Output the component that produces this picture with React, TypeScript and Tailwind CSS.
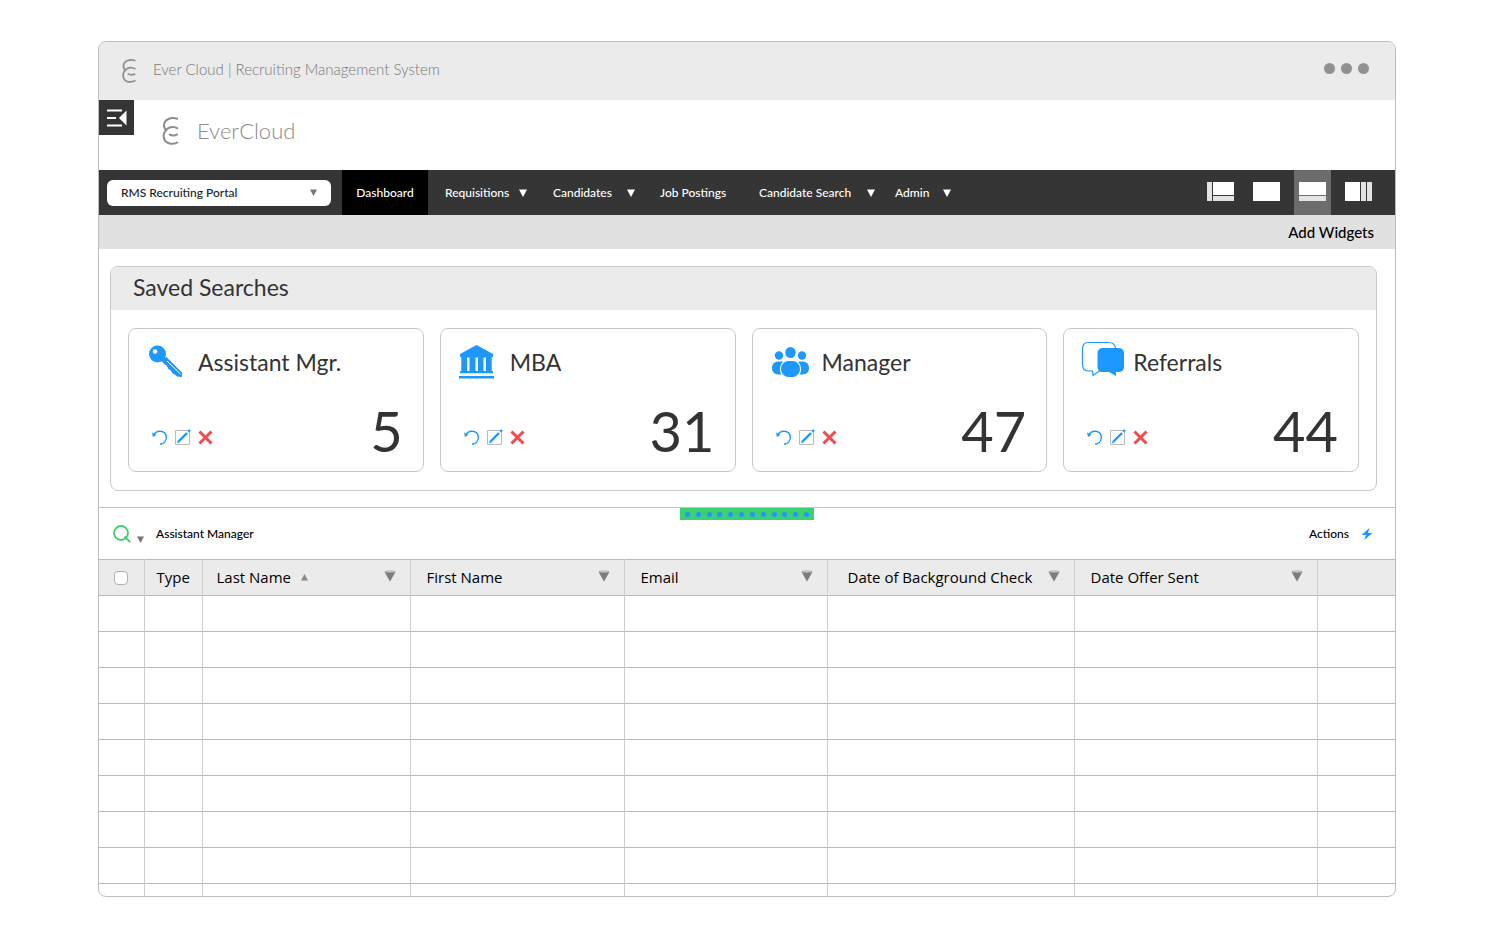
import { useState } from 'react';
import type { ReactNode } from 'react';

interface SavedSearch {
  title: string;
  count: number;
  icon: ReactNode;
}

interface Column {
  label: string;
  width: string;
  padding: string;
  sorted?: boolean;
}

const KeyIcon = () => (
  <svg viewBox="0 0 44 40" className="h-10 w-11 fill-[#1d98ff]" aria-hidden="true">
    <path d="M20.500 16 36 31.500V36L31 35.600 28.800 33.400 26.600 32.600 24.600 29.200 22.400 28 20.600 24.600 18.600 23.400 14.500 19Z" />
    <circle cx="11.500" cy="13" r="8.500" />
    <circle cx="9" cy="10.500" r="2.300" fill="#fff" />
    <path d="M21 20 34.500 33" stroke="#fff" strokeWidth="1" fill="none" />
  </svg>
);

const BankIcon = () => (
  <svg viewBox="0 0 44 40" className="h-10 w-11 fill-[#1d98ff]" aria-hidden="true">
    <path d="M18.500 4 35 13v3h-1.300v14H35v2.300H2V30h1.300V16H2v-3Z" />
    <rect x="1" y="35" width="35" height="2.500" />
    <path d="M9 16.500h2.500V30H9ZM17.500 16.500h2.500V30h-2.500ZM25.500 16.500H28V30h-2.500Z" fill="#fff" />
  </svg>
);

const PeopleIcon = () => (
  <svg viewBox="0 0 44 40" className="h-10 w-11 fill-[#1d98ff]" aria-hidden="true">
    <circle cx="9" cy="14.500" r="4.200" />
    <circle cx="32" cy="14.500" r="4.200" />
    <ellipse cx="20.500" cy="11.500" rx="5.200" ry="5.500" />
    <rect x="2" y="20.500" width="15" height="13" rx="6" />
    <rect x="24" y="20.500" width="15" height="13" rx="6" />
    <rect x="10.500" y="19.500" width="20" height="17" rx="8" stroke="#fff" strokeWidth="1.200" />
  </svg>
);

const ChatIcon = () => (
  <svg viewBox="0 0 44 40" className="h-10 w-11" aria-hidden="true">
    <path
      d="M7 1.500H27Q34.500 1.500 34.500 8V23Q34 30 27 30H18L12 34.500 11.500 30H7Q1.500 30 1.500 23V8Q1.500 1.500 7 1.500Z"
      fill="#fff"
      stroke="#1d98ff"
      strokeWidth="1.200"
    />
    <path
      d="M22 7H37Q43 7 43 12.500V26Q43 31 37 31H35V35L28 31H22Q16.500 31 16.500 26V12.500Q16.500 7 22 7Z"
      fill="#1d98ff"
    />
  </svg>
);

const savedSearches: SavedSearch[] = [
  { title: 'Assistant Mgr.', count: 5, icon: <KeyIcon /> },
  { title: 'MBA', count: 31, icon: <BankIcon /> },
  { title: 'Manager', count: 47, icon: <PeopleIcon /> },
  { title: 'Referrals', count: 44, icon: <ChatIcon /> },
];

const columns: Column[] = [
  { label: 'Last Name', width: 'w-[208px]', padding: 'pl-3.5', sorted: true },
  { label: 'First Name', width: 'w-[214px]', padding: 'pl-4' },
  { label: 'Email', width: 'w-[203px]', padding: 'pl-4' },
  { label: 'Date of Background Check', width: 'w-[247px]', padding: 'pl-5' },
  { label: 'Date Offer Sent', width: 'w-[243px]', padding: 'pl-4' },
];

const navItems = [
  { label: 'Requisitions', width: 'w-[82px]', gap: 'mr-[26px]', menu: true },
  { label: 'Candidates', width: 'w-[82px]', gap: 'mr-[25px]', menu: true },
  { label: 'Job Postings', width: 'w-[74px]', gap: 'mr-[25px]', menu: false },
  { label: 'Candidate Search', width: 'w-[116px]', gap: 'mr-5', menu: true },
  { label: 'Admin', width: 'w-[56px]', gap: 'mr-0', menu: true },
];

const layouts = [
  {
    name: 'Sidebar layout',
    shapes: (
      <>
        <path d="M0 0h5v19H0ZM6 14h21v5H6Z" fill="#e3e3e3" />
        <path d="M6 0h21v13H6Z" fill="#fff" />
      </>
    ),
  },
  { name: 'Full layout', shapes: <path d="M0 0h27v19H0Z" fill="#fff" /> },
  {
    name: 'Split layout',
    shapes: (
      <>
        <path d="M0 0h27v13H0Z" fill="#fff" />
        <path d="M0 14h27v5H0Z" fill="#e3e3e3" />
      </>
    ),
  },
  {
    name: 'Columns layout',
    shapes: (
      <>
        <path d="M0 0h15v19H0Z" fill="#fff" />
        <path d="M16 0h5v19h-5ZM22 0h5v19h-5Z" fill="#e3e3e3" />
      </>
    ),
  },
];

function Logo({ className }: { className: string }) {
  return (
    <svg viewBox="0 0 48 82" className={className} fill="none" stroke="#8e8e8e" strokeWidth="6" aria-hidden="true">
      <path d="M46 6C38 3 27 2 18 6C9 10 5 17 5 25C5 32 8 37 14 40" />
      <path d="M46 34C38 29 26 28 17 33C7 39 4 47 4 56C4 68 11 76 23 78C32 79 40 78 46 73" />
      <path d="M20 50C27 55 37 55 45 50" />
    </svg>
  );
}

function Triangle({ className }: { className: string }) {
  return (
    <svg viewBox="0 0 8 8" className={className} fill="currentColor" aria-hidden="true">
      <path d="M0 .5h8L4 8Z" />
    </svg>
  );
}

function FilterIcon() {
  return (
    <svg viewBox="0 0 12 12" className="mb-1 size-3 shrink-0" aria-hidden="true">
      <path d="M.5 1.800 6 11.500 11.500 1.800Z" fill="#7c7c7c" />
      <ellipse cx="6" cy="1.800" rx="4.800" ry=".9" fill="#ddd" stroke="#8a8a8a" strokeWidth=".6" />
    </svg>
  );
}

function SearchCard({ title, count, icon }: SavedSearch) {
  return (
    <article className="flex h-36 flex-col rounded-lg border border-[#c8c8c8] bg-white pt-3 pr-5 pl-[17px]">
      <div className="flex items-center gap-2">
        {icon}
        <h3 className="pt-0.5 text-[23px] leading-8">{title}</h3>
      </div>
      <div className="flex items-center justify-between pt-5 pl-1.5">
        <div className="flex gap-2 pt-3">
          <button type="button" aria-label={`Refresh ${title}`}>
            <svg viewBox="0 0 15 15" className="size-[15px]" aria-hidden="true">
              <path d="M1.500 5.500C4-.5 14-.5 14.300 7.500 14.300 11.500 11.500 14 8 14.200" fill="none" stroke="#1d98ff" strokeWidth="1.400" />
              <path d="M0 2.500 1 7 4.500 5Z" fill="#1d98ff" />
            </svg>
          </button>
          <button type="button" aria-label={`Edit ${title}`}>
            <svg viewBox="0 0 15 15" className="size-[15px] overflow-visible" aria-hidden="true">
              <path d="M.5.5h14v14H.5Z" fill="#fff" stroke="#bbb" />
              <path d="M3.500 11.500 12 3M13.300 1.700 15 0" stroke="#1d98ff" strokeWidth="2.400" />
              <path d="M2 13.300 2.500 10.800 4.500 12.800Z" fill="#1d98ff" />
            </svg>
          </button>
          <button type="button" aria-label={`Delete ${title}`}>
            <svg viewBox="0 0 15 15" className="size-[15px]" aria-hidden="true">
              <path d="M1.500 1.500l12 12M13.500 1.500l-12 12" stroke="#f4494f" strokeWidth="3" />
            </svg>
          </button>
        </div>
        <span className="text-[56px] leading-[60px]">{count}</span>
      </div>
    </article>
  );
}

export default function App() {
  const [activeLayout, setActiveLayout] = useState('Split layout');

  return (
    <div className="min-h-screen bg-white pt-[41px] pr-[104px] pb-[43px] pl-[98px] font-['Lato',sans-serif] text-[#333]">
      <div className="overflow-hidden rounded-lg border border-[#bdbdbd]">
        {/* Title bar */}
        <header className="flex h-[58px] items-center bg-[#ebebeb] pr-[26px] pl-[22px]">
          <Logo className="h-6 w-4" />
          <span className="pb-1 pl-4 text-[15px] font-light text-[#777]">
            Ever Cloud | Recruiting Management System
          </span>
          <button type="button" aria-label="More options" className="ml-auto flex gap-1.5 pb-1.5">
            <span className="size-[11px] rounded-full bg-[#919191]" />
            <span className="size-[11px] rounded-full bg-[#919191]" />
            <span className="size-[11px] rounded-full bg-[#919191]" />
          </button>
        </header>

        {/* Brand */}
        <div className="flex h-[70px] items-start">
          <button type="button" aria-label="Collapse menu" className="flex size-[35px] items-center justify-center bg-[#353535]">
            <svg viewBox="0 0 20 18" className="h-[18px] w-5" aria-hidden="true">
              <path d="M0 1.500h15M0 9h9M0 16.500h15" stroke="#fff" strokeWidth="2" />
              <path d="M19.500 1.500v15L12 9Z" fill="#fff" />
            </svg>
          </button>
          <div className="flex items-center gap-[18px] pt-3.5 pl-7">
            <Logo className="h-7 w-[17px]" />
            <span className="text-[22px] font-light text-[#8a8a8a]">EverCloud</span>
          </div>
        </div>

        {/* Navigation */}
        <nav className="flex h-[45px] items-stretch bg-[#353535] pr-[18px] pl-2 text-xs font-medium text-white">
          <div className="relative mr-[11px] flex items-center">
            <select
              aria-label="Portal"
              className="h-[26px] w-[224px] appearance-none rounded-md bg-white pl-3.5 text-[#222]"
            >
              <option>RMS Recruiting Portal</option>
            </select>
            <Triangle className="pointer-events-none absolute right-3.5 size-[7px] text-[#777]" />
          </div>
          <button type="button" className="mr-[17px] w-[86px] bg-black">Dashboard</button>
          {navItems.map((item) => (
            <button
              key={item.label}
              type="button"
              className={`flex items-center justify-between whitespace-nowrap ${item.width} ${item.gap}`}
            >
              {item.label}
              {item.menu && <Triangle className="size-2" />}
            </button>
          ))}
          <div className="ml-auto flex gap-[9px]">
            {layouts.map((layout) => (
              <button
                key={layout.name}
                type="button"
                aria-label={layout.name}
                onClick={() => setActiveLayout(layout.name)}
                className={`flex w-[37px] items-center justify-center pb-0.5 ${
                  activeLayout === layout.name ? 'bg-[#6c6c6c]' : ''
                }`}
              >
                <svg viewBox="0 0 27 19" className="h-[19px] w-[27px]">{layout.shapes}</svg>
              </button>
            ))}
          </div>
        </nav>

        <div className="flex h-[34px] items-center justify-end bg-[#e1e1e1] pr-[21px]">
          <button type="button" className="text-[15px] font-medium text-black">Add Widgets</button>
        </div>

        {/* Saved searches */}
        <section className="mt-[17px] mr-[18px] mb-4 ml-[11px] overflow-hidden rounded-lg border border-[#c8c8c8]">
          <h2 className="h-[43px] bg-[#ebebeb] pl-[22px] text-[23px] leading-10">Saved Searches</h2>
          <div className="grid grid-cols-4 gap-4 px-[17px] py-[18px]">
            {savedSearches.map((search) => (
              <SearchCard key={search.title} {...search} />
            ))}
          </div>
        </section>

        {/* Results toolbar */}
        <div className="relative flex h-[52px] items-center border-t border-[#c4c4c4] pr-[22px] pl-3.5 text-xs font-medium text-black">
          <button
            type="button"
            aria-label="Resize panels"
            className="absolute top-0 left-1/2 flex h-3 w-[134px] -translate-x-1/2 items-center justify-around bg-[#3ecf72] px-0.5"
          >
            {Array.from({ length: 12 }, (_, i) => (
              <span key={i} className="size-[5px] rounded-full bg-[#1d98ff]" />
            ))}
          </button>
          <button type="button" aria-label="Search" className="flex items-end gap-1.5">
            <svg viewBox="0 0 18 18" className="size-[18px]" fill="none" stroke="#3ecf72" strokeWidth="1.800" aria-hidden="true">
              <circle cx="8" cy="8" r="7" />
              <path d="M11.500 11.500 17 17" />
            </svg>
            <Triangle className="size-[7px] text-[#777]" />
          </button>
          <span className="pl-3">Assistant Manager</span>
          <button type="button" className="ml-auto flex items-center gap-3">
            Actions
            <svg viewBox="0 0 12 12" className="size-3 fill-[#1d98ff]" aria-hidden="true">
              <path d="M8.500 0 .5 7H5L3.200 12 11.500 5H7Z" />
            </svg>
          </button>
        </div>

        {/* Results */}
        <table className="w-full table-fixed border-collapse text-left text-[15px] text-black">
          <thead>
            <tr className="h-9 border-y border-[#b8b8b8] bg-[#ebebeb] font-['Open_Sans',sans-serif]">
              <th className="w-[45px] pl-[15px]">
                <input
                  type="checkbox"
                  aria-label="Select all"
                  className="block size-[14px] appearance-none rounded border border-[#b0b0b0] bg-white checked:bg-[#1d98ff]"
                />
              </th>
              <th className="w-[58px] border-l border-[#ccc] pl-3 font-medium">Type</th>
              {columns.map((column) => (
                <th key={column.label} className={`border-l border-[#ccc] pr-3.5 font-medium ${column.width} ${column.padding}`}>
                  <div className="flex items-center justify-between whitespace-nowrap">
                    <span className="flex items-center gap-2.5">
                      {column.label}
                      {column.sorted && <Triangle className="size-[7px] rotate-180 text-[#888]" />}
                    </span>
                    <FilterIcon />
                  </div>
                </th>
              ))}
              <th className="border-l border-[#ccc]" />
            </tr>
          </thead>
          <tbody>
            {Array.from({ length: 9 }, (_, row) => (
              <tr key={row} className="h-9 border-b border-[#b8b8b8] last:h-3 last:border-b-0">
                {Array.from({ length: 8 }, (_, cell) => (
                  <td key={cell} className="border-l border-[#ccc] p-0 first:border-l-0" />
                ))}
              </tr>
            ))}
          </tbody>
        </table>
      </div>
    </div>
  );
}
